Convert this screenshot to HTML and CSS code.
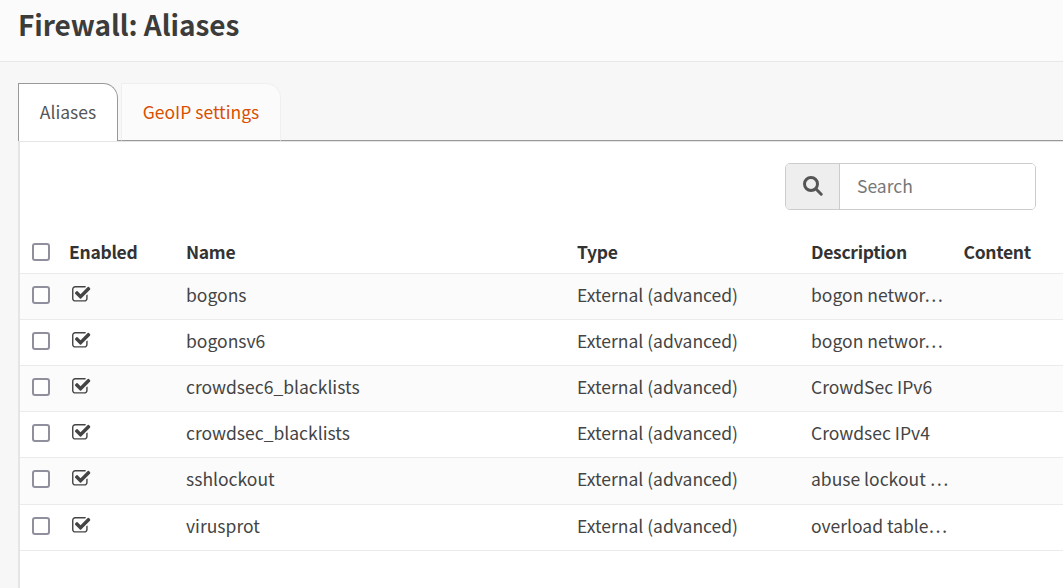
FILE: index.html
```html
<!DOCTYPE html>
<html lang="en">
<head>
<meta charset="utf-8">
<title>Firewall: Aliases</title>
<link rel="stylesheet" href="styles.css">
</head>
<body>
<svg class="defs" width="0" height="0" aria-hidden="true">
  <symbol id="check-square" viewBox="0 0 1664 1536">
    <path d="M1408 802v318q0 119-84.500 203.500t-203.500 84.500h-832q-119 0-203.500-84.500t-84.500-203.500v-832q0-119 84.500-203.500t203.500-84.500h832q63 0 117 25 15 7 18 23 3 17-9 29l-49 49q-10 10-23 10-3 0-9-2-23-6-45-6h-832q-66 0-113 47t-47 113v832q0 66 47 113t113 47h832q66 0 113-47t47-113v-254q0-13 9-22l64-64q10-10 23-10 6 0 12 3 20 8 20 29zm231-489l-814 814q-24 24-57 24t-57-24l-430-430q-24-24-24-57t24-57l110-110q24-24 57-24t57 24l263 263 647-647q24-24 57-24t57 24l110 110q24 24 24 57t-24 57z"/>
  </symbol>
</svg>
<header class="page-head"><h1>Firewall: Aliases</h1></header>
<main class="page">
  <nav class="tabs">
    <a class="tab active">Aliases</a>
    <a class="tab">GeoIP settings</a>
  </nav>
  <section class="panel">
    <div class="toolbar">
      <div class="search">
        <span class="addon"><svg class="glass" viewBox="0 0 20 20"><circle cx="8" cy="8" r="6.500"/><path d="M12.800 12.800L18.200 18.200"/></svg></span>
        <input class="field" type="text" placeholder="Search">
      </div>
    </div>
    <div class="grid">
      <div class="row head"><span><i class="box"></i></span><span>Enabled</span><span>Name</span><span>Type</span><span>Description</span><span>Content</span></div>
      <div class="row"><span><i class="box"></i></span><span><svg class="check"><use href="#check-square"/></svg></span><span>bogons</span><span>External (advanced)</span><span>bogon networ…</span><span></span></div>
      <div class="row"><span><i class="box"></i></span><span><svg class="check"><use href="#check-square"/></svg></span><span>bogonsv6</span><span>External (advanced)</span><span>bogon networ…</span><span></span></div>
      <div class="row"><span><i class="box"></i></span><span><svg class="check"><use href="#check-square"/></svg></span><span>crowdsec6_blacklists</span><span>External (advanced)</span><span>CrowdSec IPv6</span><span></span></div>
      <div class="row"><span><i class="box"></i></span><span><svg class="check"><use href="#check-square"/></svg></span><span>crowdsec_blacklists</span><span>External (advanced)</span><span>Crowdsec IPv4</span><span></span></div>
      <div class="row tall"><span><i class="box"></i></span><span><svg class="check"><use href="#check-square"/></svg></span><span>sshlockout</span><span>External (advanced)</span><span>abuse lockout …</span><span></span></div>
      <div class="row"><span><i class="box"></i></span><span><svg class="check"><use href="#check-square"/></svg></span><span>virusprot</span><span>External (advanced)</span><span>overload table…</span><span></span></div>
    </div>
  </section>
</main>
</body>
</html>
```
FILE: styles.css
```css
* { box-sizing: border-box; }
html, body { height: 100%; }
body {
  margin: 0;
  display: flex;
  flex-direction: column;
  overflow: hidden;
  background: #f7f7f7;
  color: #444;
  font: 17.5px/26px "Noto Sans CJK SC", "Open Sans", sans-serif;
  white-space: nowrap;
}
.defs { display: none; }
.page-head {
  flex: none;
  height: 62px;
  padding: 5px 18px 0;
  background: #fbfbfb;
  border-bottom: 1px solid #e7e7e7;
}
h1 { margin: 0; font-size: 28px; line-height: 38px; font-weight: 700; letter-spacing: -0.06px; color: #3c3c3b; }
.page { flex: 1; display: flex; flex-direction: column; padding: 21px 0 0 18px; }
.tabs { flex: none; display: flex; gap: 3px; height: 58px; box-shadow: inset 0 -1px #999; }
.tab {
  height: 58px;
  width: 160px;
  padding: 15px 0 0;
  text-align: center;
  color: #d94f00;
  background: #fbfbfb;
  border: 1px solid #efefef;
  border-bottom-color: #999;
  border-radius: 0 15px 0 0;
}
.tab.active {
  width: 100px;
  color: #555;
  background: #fff;
  border-color: #999;
  border-bottom: 0;
}
.panel {
  flex: 1;
  background: #fff;
  border-top: 1px solid #e5e5e5;
  border-left: 2px solid #e5e5e5;
}
.toolbar { display: flex; justify-content: flex-end; padding: 21px 27px 21px 0; }
.search {
  display: flex;
  width: 251px;
  height: 47px;
  border: 1px solid #ccc;
  border-radius: 5px;
  overflow: hidden;
}
.addon {
  display: flex;
  align-items: center;
  justify-content: center;
  width: 54px;
  padding-bottom: 1px;
  background: #eee;
  border-right: 1px solid #ccc;
}
.glass { width: 20px; height: 20px; fill: none; stroke: #555; stroke-width: 3; stroke-linecap: round; }
.field {
  flex: 1;
  min-width: 0;
  padding: 0 17px 2px;
  border: 0;
  background: #fff;
  color: #555;
  font: inherit;
}
.field::placeholder { color: #777; opacity: 1; }
.row {
  display: grid;
  grid-template-columns: 49px 117px 391px 234px 152.500px 1fr;
  height: 46px;
  border-bottom: 1px solid #ebebeb;
  align-items: center;
  padding-bottom: 3px;
}
.row:nth-child(even) { background: #fbfbfb; }
.row.head { height: 43px; padding-bottom: 1px; font-weight: 700; letter-spacing: -0.3px; color: #333; }
.row.tall { height: 47px; padding-bottom: 4px; }
.row > :first-child { padding-left: 12px; }
.box {
  display: block;
  width: 18px;
  height: 18px;
  border: 2px solid #8f8f9d;
  border-radius: 3px;
  background: #fff;
}
.check { display: block; width: 18.500px; height: 17px; margin: 0 0 1px 3px; fill: #444; }
```
